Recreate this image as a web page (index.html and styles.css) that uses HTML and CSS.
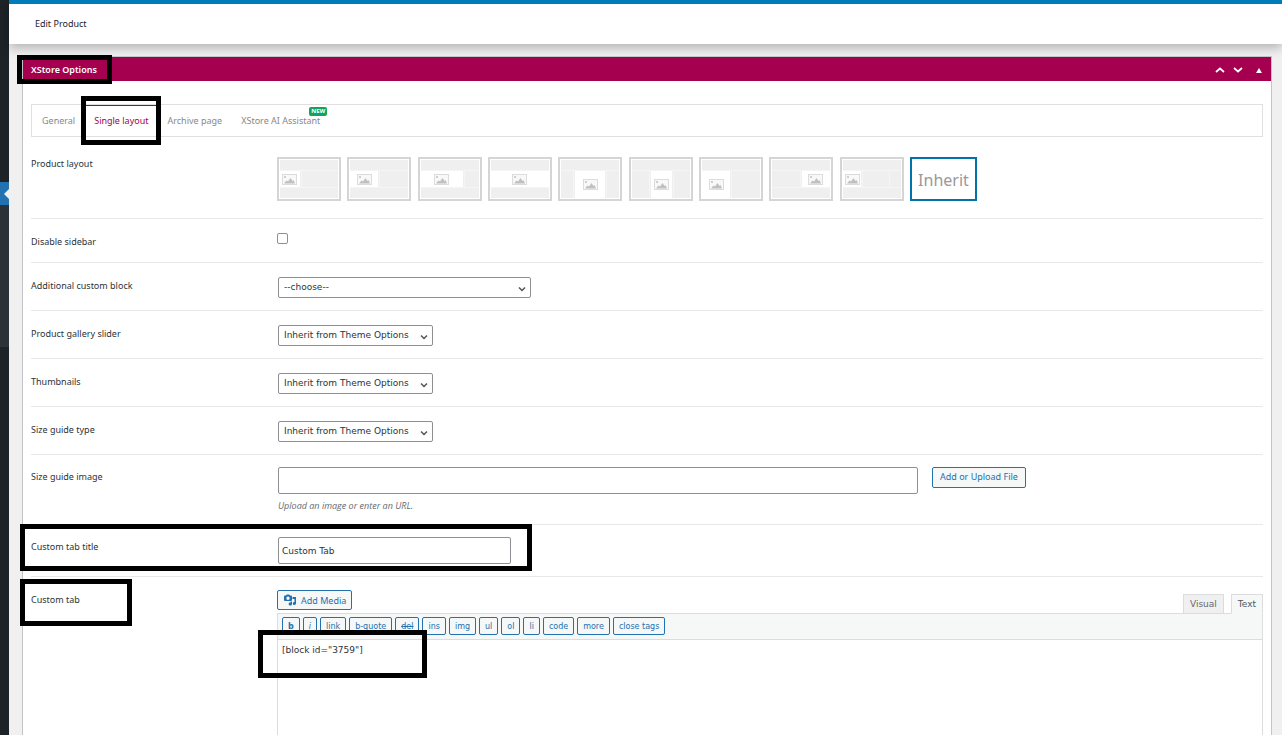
FILE: index.html
```html
<!DOCTYPE html>
<html lang="en">
<head>
    <meta charset="UTF-8">
    <meta name="viewport" content="width=device-width, initial-scale=1.0">
    <title>Edit Product</title>
    <link rel="stylesheet" href="styles.css">
</head>
<body>
    <!-- Shared shapes -->
    <svg class="sprite" aria-hidden="true">
        <symbol id="pic" viewBox="0 0 15 11">
            <rect x="0.5" y="0.5" width="14" height="10" fill="#f8f8f8" stroke="#dcdcdc"/>
            <rect x="2" y="2" width="2" height="2" fill="#cfcfcf"/>
            <path d="M2 9.500 L4.500 6.500 L6 7.500 L8.500 4 L10.500 7 L11.500 6 L13 9.500 Z" fill="#c0c0c0"/>
        </symbol>
    </svg>

    <div class="admin">
        <aside class="menu">
            <div class="menu-current"></div>
            <div class="menu-sub"></div>
        </aside>

        <div class="main">
            <header class="page-header">
                <h1>Edit Product</h1>
            </header>

            <section class="panel">
                <div class="panel-header">
                    <h2 class="marked mark-title">XStore Options</h2>
                    <div class="panel-actions">
                        <button type="button" aria-label="Move up"><svg width="10" height="6" viewBox="0 0 10 6"><path d="M1 5 L5 1.500 L9 5" fill="none" stroke="#fff" stroke-width="1.700"/></svg></button>
                        <button type="button" aria-label="Move down"><svg width="10" height="6" viewBox="0 0 10 6"><path d="M1 1 L5 4.500 L9 1" fill="none" stroke="#fff" stroke-width="1.700"/></svg></button>
                        <button type="button" class="toggle" aria-label="Toggle panel"><svg width="6" height="5" viewBox="0 0 6 5"><path d="M0 5 L3 0 L6 5 Z" fill="#fff"/></svg></button>
                    </div>
                </div>

                <div class="panel-body">
                    <nav class="tabs">
                        <a href="#">General</a>
                        <a href="#" class="active marked mark-tab">Single layout</a>
                        <a href="#">Archive page</a>
                        <a href="#" class="has-badge">XStore AI Assistant<span class="badge">NEW</span></a>
                    </nav>

                    <div class="row row-layout">
                        <div class="label">Product layout</div>
                        <div class="layouts">
                            <label><input type="radio" name="layout" aria-label="Layout 1"><svg viewBox="0 0 60 40"><rect class="bg" x="1" y="1" width="58" height="38"/><path class="ln" d="M1 11.500H59M1 28.500H59M22.500 11V29"/><rect class="bx" x="1" y="12" width="20" height="16"/><use href="#pic" x="3" y="15" width="15" height="11"/></svg></label>
                            <label><input type="radio" name="layout" aria-label="Layout 2"><svg viewBox="0 0 60 40"><rect class="bg" x="1" y="1" width="58" height="38"/><path class="ln" d="M1 11.500H59M1 28.500H59M30.500 11V29"/><rect class="bx" x="1" y="12" width="28" height="16"/><use href="#pic" x="8" y="15" width="15" height="11"/></svg></label>
                            <label><input type="radio" name="layout" aria-label="Layout 3"><svg viewBox="0 0 60 40"><rect class="bg" x="1" y="1" width="58" height="38"/><path class="ln" d="M1 11.500H59M1 28.500H59M44.500 11V29"/><rect class="bx" x="1" y="12" width="42" height="16"/><use href="#pic" x="14" y="15" width="15" height="11"/></svg></label>
                            <label><input type="radio" name="layout" aria-label="Layout 4"><svg viewBox="0 0 60 40"><rect class="bg" x="1" y="1" width="58" height="38"/><path class="ln" d="M1 11.500H59M1 28.500H59"/><rect class="bx" x="1" y="12" width="58" height="16"/><use href="#pic" x="22" y="15" width="15" height="11"/></svg></label>
                            <label><input type="radio" name="layout" aria-label="Layout 5"><svg viewBox="0 0 60 40"><rect class="bg" x="1" y="1" width="58" height="38"/><path class="ln" d="M1 11.500H59M13.500 11V39M46.500 11V39"/><rect class="bx" x="15" y="12" width="30" height="27"/><use href="#pic" x="23" y="20" width="15" height="11"/></svg></label>
                            <label><input type="radio" name="layout" aria-label="Layout 6"><svg viewBox="0 0 60 40"><rect class="bg" x="1" y="1" width="58" height="38"/><path class="ln" d="M1 11.500H59M18.500 11V39M42.500 11V39"/><rect class="bx" x="20" y="12" width="21" height="27"/><use href="#pic" x="23" y="20" width="15" height="11"/></svg></label>
                            <label><input type="radio" name="layout" aria-label="Layout 7"><svg viewBox="0 0 60 40"><rect class="bg" x="1" y="1" width="58" height="38"/><path class="ln" d="M1 11.500H59M30.500 11V39"/><rect class="bx" x="1" y="12" width="28" height="27"/><use href="#pic" x="8" y="20" width="15" height="11"/></svg></label>
                            <label><input type="radio" name="layout" aria-label="Layout 8"><svg viewBox="0 0 60 40"><rect class="bg" x="1" y="1" width="58" height="38"/><path class="ln" d="M1 11.500H59M1 28.500H59M29.500 11V29"/><rect class="bx" x="31" y="12" width="28" height="16"/><use href="#pic" x="37" y="15" width="15" height="11"/></svg></label>
                            <label><input type="radio" name="layout" aria-label="Layout 9"><svg viewBox="0 0 60 40"><rect class="bg" x="1" y="1" width="58" height="38"/><path class="ln" d="M1 11.500H59M1 28.500H59M20.500 11V29M47.500 11V29"/><rect class="bx" x="1" y="12" width="18" height="16"/><use href="#pic" x="3" y="15" width="15" height="11"/></svg></label>
                            <label class="selected"><input type="radio" name="layout" checked>Inherit</label>
                        </div>
                    </div>

                    <div class="row row-check">
                        <label class="label" for="disable-sidebar">Disable sidebar</label>
                        <input type="checkbox" id="disable-sidebar">
                    </div>

                    <div class="row">
                        <label class="label" for="custom-block">Additional custom block</label>
                        <div class="select wide">
                            <select id="custom-block"><option>--choose--</option></select>
                            <svg width="8" height="5" viewBox="0 0 8 5"><path d="M1 0.500 L4 3.500 L7 0.500" fill="none" stroke="#555" stroke-width="1.500"/></svg>
                        </div>
                    </div>

                    <div class="row">
                        <label class="label" for="gallery-slider">Product gallery slider</label>
                        <div class="select">
                            <select id="gallery-slider"><option>Inherit from Theme Options</option></select>
                            <svg width="8" height="5" viewBox="0 0 8 5"><path d="M1 0.500 L4 3.500 L7 0.500" fill="none" stroke="#555" stroke-width="1.500"/></svg>
                        </div>
                    </div>

                    <div class="row">
                        <label class="label" for="thumbnails">Thumbnails</label>
                        <div class="select">
                            <select id="thumbnails"><option>Inherit from Theme Options</option></select>
                            <svg width="8" height="5" viewBox="0 0 8 5"><path d="M1 0.500 L4 3.500 L7 0.500" fill="none" stroke="#555" stroke-width="1.500"/></svg>
                        </div>
                    </div>

                    <div class="row">
                        <label class="label" for="size-guide-type">Size guide type</label>
                        <div class="select">
                            <select id="size-guide-type"><option>Inherit from Theme Options</option></select>
                            <svg width="8" height="5" viewBox="0 0 8 5"><path d="M1 0.500 L4 3.500 L7 0.500" fill="none" stroke="#555" stroke-width="1.500"/></svg>
                        </div>
                    </div>

                    <div class="row row-text">
                        <label class="label" for="size-guide-image">Size guide image</label>
                        <div class="field">
                            <div class="upload">
                                <input type="text" id="size-guide-image" class="text-input large">
                                <button type="button" class="button">Add or Upload File</button>
                            </div>
                            <p class="description">Upload an image or enter an URL.</p>
                        </div>
                    </div>

                    <div class="row row-text marked mark-row">
                        <label class="label" for="custom-tab-title">Custom tab title</label>
                        <div class="field">
                            <input type="text" id="custom-tab-title" class="text-input" value="Custom Tab">
                        </div>
                    </div>

                    <div class="row row-editor">
                        <label class="label marked mark-label" for="custom-tab">Custom tab</label>
                        <div class="editor">
                            <div class="editor-tools">
                                <button type="button" class="button media">
                                    <svg width="13" height="12" viewBox="0 0 13 12"><path fill="#2271b1" fill-rule="evenodd" d="M1 1.500H2L2.800 0.500H5.200L6 1.500H7Q8 1.500 8 2.500V6Q8 7 7 7H1Q0 7 0 6V2.500Q0 1.500 1 1.500ZM4 2.500A1.700 1.700 0 1 0 4 5.900A1.700 1.700 0 1 0 4 2.500Z"/><path fill="#2271b1" d="M8.500 3H12V9.500A1.600 1.500 0 1 1 10.500 8V5H8.500ZM6.500 7.500H8V10A1.700 1.500 0 1 1 6.500 8.600Z"/></svg>
                                    Add Media
                                </button>
                                <div class="editor-tabs">
                                    <button type="button">Visual</button>
                                    <button type="button" class="current">Text</button>
                                </div>
                            </div>
                            <div class="editor-box">
                                <div class="quicktags">
                                    <button type="button"><b>b</b></button>
                                    <button type="button"><i>i</i></button>
                                    <button type="button">link</button>
                                    <button type="button">b-quote</button>
                                    <button type="button"><del>del</del></button>
                                    <button type="button">ins</button>
                                    <button type="button">img</button>
                                    <button type="button">ul</button>
                                    <button type="button">ol</button>
                                    <button type="button">li</button>
                                    <button type="button">code</button>
                                    <button type="button">more</button>
                                    <button type="button">close tags</button>
                                </div>
                                <div class="marked mark-code">
                                    <textarea id="custom-tab">[block id="3759"]</textarea>
                                </div>
                            </div>
                        </div>
                    </div>
                </div>
            </section>
        </div>
    </div>
</body>
</html>
```

FILE: styles.css
```css
*,
*::after {
    box-sizing: border-box;
}
body {
    margin: 0;
    background: #f0f0f1;
    color: #2c3338;
    font-family: "Noto Sans", sans-serif;
    font-size: 9px;
    line-height: 18px;
}
button,
input,
select,
textarea {
    margin: 0;
    font-family: inherit;
    font-size: inherit;
}
button {
    cursor: pointer;
}
.sprite {
    display: none;
}
.admin {
    display: flex;
    min-height: 100vh;
}

/* Collapsed admin menu */
.menu {
    flex: none;
    width: 9px;
    padding-top: 182px;
    background: #1d2327;
}
.menu-current {
    display: flex;
    align-items: center;
    justify-content: flex-end;
    height: 23px;
    background: #2271b1;
}
.menu-current::after {
    content: "";
    border: 5px solid transparent;
    border-left-width: 0;
    border-right-color: #f0f0f1;
}
.menu-sub {
    height: 142px;
    background: #2c3338;
}

/* Page header */
.main {
    display: flex;
    flex: 1;
    flex-direction: column;
    min-width: 0;
}
.page-header {
    padding: 11px 26px;
    border-top: 4px solid #007cba;
    background: #fff;
    box-shadow: 0 4px 10px rgba(0, 0, 0, 0.25);
}
h1 {
    margin: 0;
    font-size: 9px;
    font-weight: 400;
    color: #1d2327;
}

/* Options panel */
.panel {
    flex: 1;
    margin: 12px 10px 0 13px;
    border: 1px solid #c3c4c7;
    border-bottom: 0;
    background: #fff;
}
.panel-header {
    display: flex;
    align-items: center;
    justify-content: space-between;
    height: 24px;
    padding: 2px 9px 0 8px;
    background: #a4004f;
}
h2 {
    margin: 0;
    font-size: 9px;
    font-weight: 600;
    color: #fff;
}
.panel-actions {
    display: flex;
    align-items: center;
    gap: 8px;
}
.panel-actions button {
    display: flex;
    padding: 0;
    border: 0;
    background: none;
}
.panel-actions .toggle {
    margin-left: 5px;
}
.panel-body {
    padding: 23px 8px 0;
}

/* Tabs */
.tabs {
    display: flex;
    gap: 1px;
    height: 33px;
    padding-left: 1px;
    border: 1px solid #e0e0e0;
}
.tabs a {
    position: relative;
    padding: 7px 9px 0;
    color: #888;
    text-decoration: none;
}
.tabs .active {
    color: #a4004f;
    box-shadow: inset 0 1px #a4004f;
}
.badge {
    position: absolute;
    top: 2px;
    right: 2px;
    padding: 0 2px;
    border-radius: 2px;
    background: #10a45d;
    color: #fff;
    font-size: 6px;
    font-weight: 700;
    line-height: 9px;
}

/* Option rows */
.row {
    display: flex;
    align-items: flex-start;
    min-height: 48px;
    padding: 14px 0 12px;
    border-bottom: 1px solid #e8e8e8;
}
.label {
    flex: none;
    width: 247px;
}
.row-layout {
    padding: 18px 0 17px;
}
.row-check {
    min-height: 44px;
    padding-bottom: 10px;
}
.row-text {
    min-height: 52px;
    padding: 12px 0 9px;
}
.row-text .label {
    padding-top: 1px;
}
.row-editor {
    padding-bottom: 0;
    border-bottom: 0;
}

/* Layout picker */
.layouts {
    display: flex;
    justify-content: space-between;
    width: 700px;
    margin: 2px 0 0 -1px;
}
.layouts label {
    width: 64px;
    height: 44px;
    border: 2px solid #d5d5d5;
}
.layouts svg {
    display: block;
}
.layouts input {
    position: absolute;
    opacity: 0;
}
.layouts .selected {
    width: 67px;
    border-color: #0073aa;
    color: #999;
    font-size: 16px;
    line-height: 42px;
    text-align: center;
}
.bg {
    fill: #efefef;
}
.bx {
    fill: #fff;
}
.ln {
    fill: none;
    stroke: #f5f5f5;
}

/* Fields */
input[type="checkbox"] {
    appearance: none;
    width: 11px;
    height: 11px;
    margin-left: -1px;
    border: 1px solid #8c8f94;
    border-radius: 2px;
    background: #fff;
}
.select {
    display: grid;
    align-items: center;
    width: 155px;
}
.select.wide {
    width: 253px;
}
.select select,
.select svg {
    grid-area: 1 / 1;
}
.select svg {
    justify-self: end;
    margin: 3px 5px 0 0;
    pointer-events: none;
}
.select select {
    appearance: none;
    width: 100%;
    height: 21px;
    padding: 0 5px 2px;
    border: 1px solid #8c8f94;
    border-radius: 2px;
    background: #fff;
    color: #2c3338;
    font-family: "DejaVu Sans", sans-serif;
}
.field {
    flex: 1;
}
.upload {
    display: flex;
    align-items: flex-start;
    gap: 14px;
}
.text-input {
    display: block;
    width: 233px;
    height: 27px;
    padding: 0 3px;
    border: 1px solid #8c8f94;
    border-radius: 2px;
    color: #2c3338;
    font-family: "DejaVu Sans", sans-serif;
}
.text-input.large {
    width: 640px;
}
.description {
    margin: 3px 0 0;
    color: #646970;
    font-family: "Open Sans", sans-serif;
    font-style: italic;
}
.button {
    height: 21px;
    padding: 0 7px 2px;
    border: 1px solid #2271b1;
    border-radius: 2px;
    background: #f6f7f7;
    color: #2271b1;
}

/* Text editor */
.editor {
    flex: 1;
    min-width: 0;
    margin: -1px 0 0 -1px;
}
.editor-tools {
    display: flex;
    justify-content: space-between;
    height: 23px;
}
.media {
    display: flex;
    align-items: center;
    gap: 4px;
    height: 20px;
    padding: 0 5px 0 6px;
}
.editor-tabs {
    display: flex;
    gap: 7px;
    padding-top: 4px;
    height: 24px;
    z-index: 1;
}
.editor-tabs button {
    padding: 0 6px;
    border: 1px solid #dcdcde;
    background: #f0f0f1;
    color: #646970;
    font-family: "DejaVu Sans", sans-serif;
}
.editor-tabs .current {
    border-bottom-color: #f6f7f7;
    background: #f6f7f7;
    color: #50575e;
}
.editor-box {
    border: 1px solid #dcdcde;
    border-bottom: 0;
}
.quicktags {
    display: flex;
    gap: 3px;
    padding: 3px 4px 4px;
    border-bottom: 1px solid #dcdcde;
    background: #f6f7f7;
}
.quicktags button {
    height: 18px;
    padding: 0 5px;
    border: 1px solid #2271b1;
    border-radius: 2px;
    background: #f6f7f7;
    color: #2271b1;
    font-family: "DejaVu Sans", sans-serif;
    font-size: 8px;
}
textarea {
    display: block;
    width: 100%;
    height: 95px;
    padding: 0 4px;
    border: 0;
    outline: 0;
    resize: none;
    color: #2c3338;
    font-family: "DejaVu Sans", sans-serif;
    line-height: 20px;
}

/* Black marker frames drawn over the page */
.marked {
    position: relative;
}
.marked::after {
    content: "";
    position: absolute;
    border: 5px solid #000;
    pointer-events: none;
    z-index: 2;
}
.mark-title::after {
    inset: -6px -15px -5px -14px;
}
.mark-tab::after {
    inset: -9px -3px -9px -4px;
}
.mark-row::after {
    top: -1px;
    left: -11px;
    width: 512px;
    height: 47px;
}
.mark-label::after {
    top: -12px;
    left: -11px;
    width: 112px;
    height: 47px;
}
.mark-code::after {
    top: -10px;
    left: -20px;
    width: 169px;
    height: 48px;
}
```
